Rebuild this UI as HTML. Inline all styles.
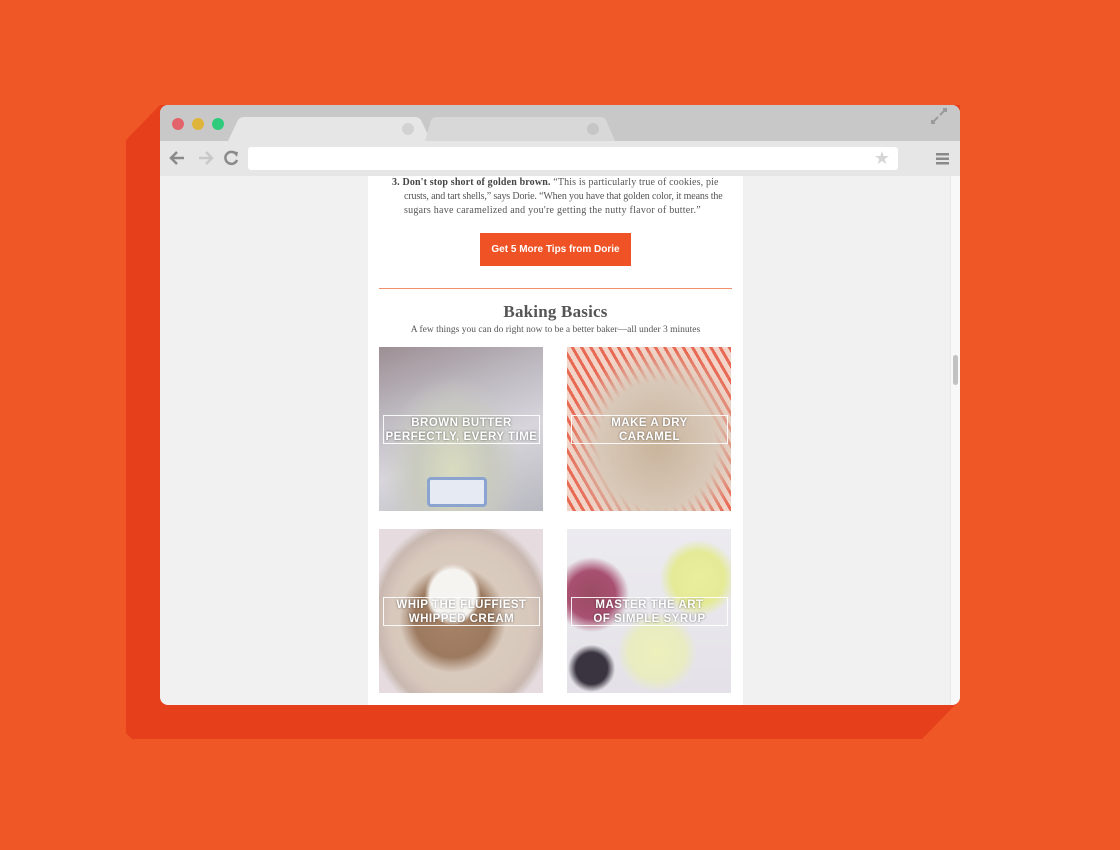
<!DOCTYPE html>
<html><head><meta charset="utf-8"><style>
*{margin:0;padding:0;box-sizing:border-box}
body{width:1120px;height:850px;background:#f05726;position:relative;overflow:hidden;font-family:"Liberation Serif",serif}
.win{position:absolute;left:160px;top:105px;width:800px;height:600px;border-radius:8px;overflow:hidden;background:#f1f1f1}
.tabbar{position:absolute;left:0;top:0;width:800px;height:36px;background:#c8c8c8}
.dot{position:absolute;top:13px;width:12px;height:12px;border-radius:50%}
.toolbar{position:absolute;left:0;top:36px;width:800px;height:35px;background:#e6e6e6}
.url{position:absolute;left:88px;top:6px;width:650px;height:23px;background:#fff;border-radius:3px}
.page{position:absolute;left:208px;top:71px;width:375px;height:529px;background:#fff}
.scroll{position:absolute;left:790px;top:71px;width:10px;height:529px;background:#f8f8f8;border-left:1px solid #e8e8e8}
.tl{position:absolute;left:36px;font-size:10px;line-height:14px;color:#555;white-space:nowrap}
.btn{position:absolute;left:112px;top:57px;width:151px;height:33px;background:#ef5325;color:#fff;font:bold 10px "Liberation Sans",sans-serif;text-align:center;line-height:33px}
.hr{position:absolute;left:11px;top:112px;width:353px;height:1px;background:#f2906e}
h2{position:absolute;left:0;top:126px;width:375px;text-align:center;font-size:17px;color:#555;font-weight:bold;letter-spacing:.2px}
.sub{position:absolute;left:0;top:149px;width:375px;text-align:center;font-size:9.5px;color:#555;white-space:nowrap}
.tile{position:absolute;width:164px;height:164px;overflow:hidden}
.lab{position:absolute;left:4px;top:68px;width:157px;height:29px;border:1px solid rgba(255,255,255,.9);color:#fff;font:bold 11.5px/14px "Liberation Sans",sans-serif;letter-spacing:.5px;text-align:center;text-shadow:0 0 2px rgba(0,0,0,.5);white-space:nowrap}
</style></head><body>
<svg style="position:absolute;left:0;top:0" width="1120" height="850"><polygon points="160,105 960,105 960,700 922,739 132,739 126,733 126,140" fill="#e63f1b"/></svg>
<div class="win">
 <div class="tabbar">
  <div class="dot" style="left:12px;background:#e3636a"></div>
  <div class="dot" style="left:32px;background:#dfb43a"></div>
  <div class="dot" style="left:52px;background:#2fcb7c"></div>
  <svg style="position:absolute;left:0;top:0" width="800" height="36"><path d="M68,36 L78,15 Q80,12 84,12 L255,12 Q259,12 261,15 L271,36Z" fill="#e6e6e6"/><path d="M265,36 L271,15 Q273,12 277,12 L440,12 Q444,12 446,15 L455,36Z" fill="#d8d8d8"/><circle cx="248" cy="24" r="6" fill="#d2d2d2"/><circle cx="433" cy="24" r="6" fill="#c6c6c6"/>
  <path d="M780,10 l6,-6 M783,4 h3 v3 M778,12 l-6,6 M772,15 v3 h3" stroke="#9a9a9a" stroke-width="2" fill="none"/></svg>
 </div>
 <div class="toolbar">
  <svg style="position:absolute;left:0;top:0" width="800" height="35"><path d="M24,17 H11 M17,11 L11,17 L17,23" stroke="#8a8a8a" stroke-width="2.5" fill="none"/><path d="M39,17 H52 M46,11 L52,17 L46,23" stroke="#c8c8c8" stroke-width="2.5" fill="none"/><path d="M76,13 A6,6 0 1 0 77,19" stroke="#8a8a8a" stroke-width="2.5" fill="none"/><path d="M72,10 L78,11 L77,16Z" fill="#8a8a8a"/>
  <rect x="776" y="12" width="13" height="2.5" fill="#8a8a8a"/><rect x="776" y="16.5" width="13" height="2.5" fill="#8a8a8a"/><rect x="776" y="21" width="13" height="2.5" fill="#8a8a8a"/></svg>
  <div class="url"><span style="position:absolute;right:8px;top:0;color:#d6d6d6;font-size:18px;line-height:22px">★</span></div>
 </div>
 <div class="page">
  <div class="tl" style="left:24px;top:0;letter-spacing:.15px"><b style="color:#444">3. Don't stop short of golden brown.</b> “This is particularly true of cookies, pie</div>
  <div class="tl" style="top:14px;letter-spacing:-.15px">crusts, and tart shells,” says Dorie. “When you have that golden color, it means the</div>
  <div class="tl" style="top:28px;letter-spacing:.25px">sugars have caramelized and you're getting the nutty flavor of butter.”</div>
  <div class="btn">Get 5 More Tips from Dorie</div>
  <div class="hr"></div>
  <h2>Baking Basics</h2>
  <div class="sub">A few things you can do right now to be a better baker—all under 3 minutes</div>
  <div class="tile" style="left:11px;top:171px;background:radial-gradient(ellipse at 45% 75%,#d9dcc0 0,#c9cac0 30%,transparent 55%),linear-gradient(160deg,#9d8f94 0,#c0bcc4 35%,#d8d6dc 60%,#b8b8c0 100%)"><div style="position:absolute;left:48px;top:130px;width:60px;height:30px;border:3px solid #8aa4cf;border-radius:4px;background:#e6eaf2"></div><div class="lab">BROWN BUTTER<br>PERFECTLY, EVERY TIME</div></div>
  <div class="tile" style="left:199px;top:171px;background:radial-gradient(ellipse at 55% 60%,#c9b49c 0,#d8c8b8 45%,transparent 70%),repeating-linear-gradient(60deg,#f2d4c8 0 5px,#e86a55 5px 8px)"><div class="lab">MAKE A DRY<br>CARAMEL</div></div>
  <div class="tile" style="left:11px;top:353px;background:radial-gradient(ellipse at 45% 40%,#f6f4f0 0,#f6f4f0 18%,transparent 22%),radial-gradient(ellipse at 45% 55%,#a88468 0,#9c7a60 30%,transparent 42%),radial-gradient(ellipse at 50% 55%,#ddd0c4 0,#d8c8bc 60%,#c8b8b0 72%,#e6dce0 80%)"><div class="lab">WHIP THE FLUFFIEST<br>WHIPPED CREAM</div></div>
  <div class="tile" style="left:199px;top:353px;background:radial-gradient(circle at 80% 30%,#e8ee9c 0,#e4ea96 15%,transparent 22%),radial-gradient(circle at 55% 75%,#eef0bc 0,#e8ecc0 18%,transparent 26%),radial-gradient(circle at 15% 40%,#9a4c64 0,#a85070 14%,transparent 22%),radial-gradient(circle at 15% 85%,#3a3440 0,#3a3440 8%,transparent 12%),linear-gradient(#ecebf0,#e4e2e8)"><div class="lab">MASTER THE ART<br>OF SIMPLE SYRUP</div></div>
 </div>
 <div class="scroll"><div style="position:absolute;left:2px;top:179px;width:5px;height:30px;border-radius:3px;background:#c2c2c2"></div></div>
</div>
</body></html>
